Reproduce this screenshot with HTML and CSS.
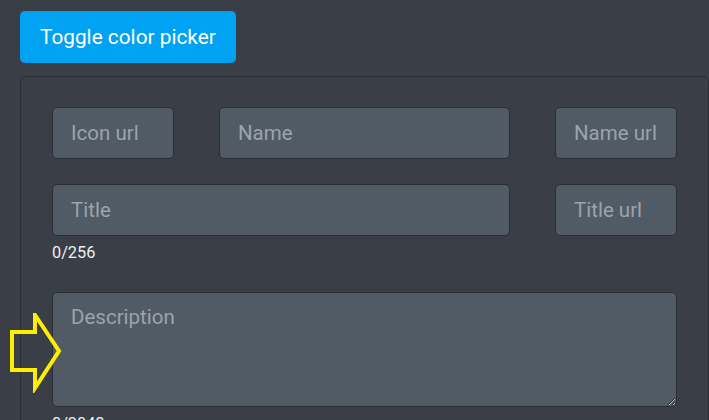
FILE: index.html
```html
<!DOCTYPE html>
<html lang="en">

<head>
    <meta charset="UTF-8">
    <meta name="viewport" content="width=device-width, initial-scale=1.0">
    <title>Embed builder</title>
    <link rel="stylesheet" href="styles.css">
</head>

<body>
    <button class="toggle-btn">Toggle color picker</button>

    <div class="panel">
        <div class="grid">
            <input class="field" type="text" placeholder="Icon url">
            <input class="field" type="text" placeholder="Name">
            <input class="field" type="text" placeholder="Name url">

            <div class="wide">
                <input class="field" type="text" placeholder="Title">
                <p class="counter">0/256</p>
            </div>
            <input class="field" type="text" placeholder="Title url">

            <div class="full desc-wrap">
                <!-- hint arrow pointing at the description box -->
                <svg class="hint-arrow" width="54" height="80" viewBox="0 0 54 80">
                    <polygon points="2,19 25,19 25,2 49,38 25,75 25,57 2,57"
                        fill="none" stroke="#ffee00" stroke-width="4" stroke-linejoin="miter" />
                </svg>
                <textarea class="field desc" placeholder="Description"></textarea>
                <p class="counter">0/2048</p>
            </div>
        </div>
    </div>
</body>

</html>
```

FILE: styles.css
```css
body {
    background-color: #3a3f47;
    font-family: Roboto, "Noto Sans", sans-serif;
    margin: 0;
    padding: 11px 0 0 20px;
    overflow: hidden;
}

.toggle-btn {
    display: block;
    background-color: #00a2f1;
    color: white;
    font-family: Roboto, sans-serif;
    font-size: 20.8px;
    height: 52px;
    padding: 0 20px;
    border: none;
    border-radius: 5px;
    cursor: pointer;
}

.toggle-btn:hover {
    background-color: #0090d8;
}

.panel {
    margin-top: 13px;
    border: 1px solid #2a2e34;
    border-radius: 6px;
    padding: 30px 31px 30px 31px;
}

.grid {
    display: grid;
    grid-template-columns: 122px 1fr 122px;
    column-gap: 45px;
    row-gap: 25px;
}

.wide {
    grid-column: 1 / 3;
}

.full {
    grid-column: 1 / 4;
}

.field {
    box-sizing: border-box;
    width: 100%;
    height: 52px;
    padding: 0 18px;
    background-color: #515b65;
    border: 1px solid #2a2e34;
    border-radius: 5px;
    color: #e6e9ec;
    font-family: Roboto, sans-serif;
    font-size: 20.5px;
    outline: none;
}

.field::placeholder {
    color: #9aa4ad;
}

.counter {
    margin: 6px 0 0;
    font-size: 16.3px;
    line-height: 22px;
    color: #eef0f2;
}

.desc-wrap {
    position: relative;
    margin-top: 3px;
}

.desc {
    display: block;
    height: 115px;
    padding-top: 12px;
    resize: vertical;
}

.hint-arrow {
    position: absolute;
    left: -42px;
    top: 21px;
}
```
